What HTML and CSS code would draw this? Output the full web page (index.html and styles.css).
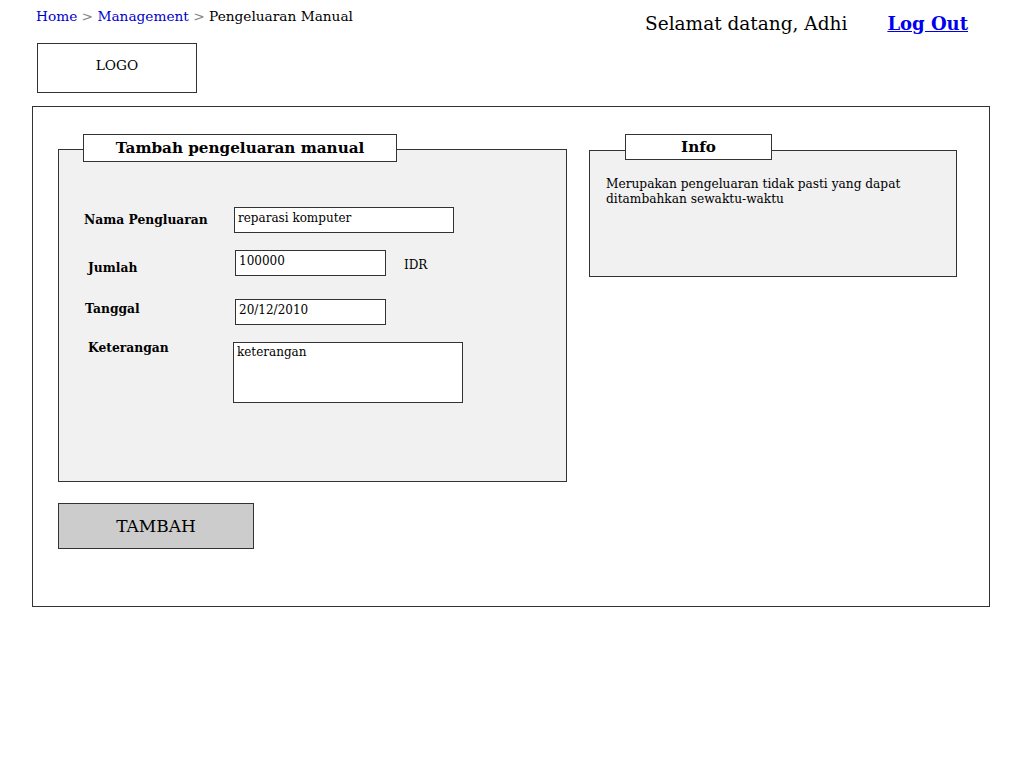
FILE: index.html
```html
<!DOCTYPE html>
<html lang="id">
<head>
<meta charset="utf-8">
<title>Pengeluaran Manual</title>
<link rel="stylesheet" href="styles.css">
</head>
<body>
<header class="top">
  <div class="top-left">
    <nav class="crumbs">
      <a href="#">Home</a><span class="sep"> &gt; </span><a href="#">Management</a><span class="sep"> &gt; </span><span class="here">Pengeluaran Manual</span>
    </nav>
    <div class="logo">LOGO</div>
  </div>
  <div class="welcome">
    <span class="hello">Selamat datang, Adhi</span>
    <a href="#" class="logout">Log Out</a>
  </div>
</header>

<main class="frame">
  <div class="panels">
    <section class="panel panel-form">
      <div class="tab tab-form">Tambah pengeluaran manual</div>
      <div class="box box-form">
        <div class="row row-1">
          <label class="lbl lbl-1">Nama Pengluaran</label>
          <input class="field field-wide" type="text" value="reparasi komputer">
        </div>
        <div class="row row-2">
          <label class="lbl lbl-2">Jumlah</label>
          <input class="field field-mid" type="text" value="100000">
          <span class="unit">IDR</span>
        </div>
        <div class="row row-3">
          <label class="lbl lbl-3">Tanggal</label>
          <input class="field field-mid" type="text" value="20/12/2010">
        </div>
        <div class="row row-4">
          <label class="lbl lbl-4">Keterangan</label>
          <textarea class="area">keterangan</textarea>
        </div>
      </div>
    </section>

    <section class="panel panel-info">
      <div class="tab tab-info">Info</div>
      <div class="box box-info">
        <p class="info-text">Merupakan pengeluaran tidak pasti yang dapat<br>ditambahkan sewaktu-waktu</p>
      </div>
    </section>
  </div>

  <button class="btn" type="button">TAMBAH</button>
</main>
</body>
</html>
```

FILE: styles.css
```css
* { box-sizing: border-box; }

body {
  margin: 0;
  font-family: "DejaVu Serif", serif;
  color: #000;
  background: #fff;
}

.top {
  display: flex;
  justify-content: space-between;
  align-items: flex-start;
  padding: 8px 56px 0 36px;
}

.crumbs {
  font-size: 13.7px;
  line-height: 16px;
  white-space: nowrap;
}
.crumbs a { color: #0000cc; text-decoration: none; }
.crumbs .sep { color: #888; }
.crumbs .here { color: #000; }

.logo {
  margin: 19px 0 0 1px;
  width: 160px;
  height: 50px;
  border: 1px solid #333;
  text-align: center;
  font-size: 13.7px;
  padding-top: 13px;
}

.welcome {
  display: flex;
  gap: 40px;
  margin-top: 5px;
  font-size: 18px;
  line-height: 22px;
}
.hello { font-size: 18.5px; }
.logout {
  color: #0000ee;
  font-weight: bold;
  text-decoration: underline;
}

.frame {
  margin: 13px 0 0 32px;
  width: 958px;
  height: 501px;
  border: 1px solid #333;
  padding: 27px 0 0 25px;
}

.panels {
  display: flex;
  gap: 22px;
  align-items: flex-start;
}

.panel {
  display: flex;
  flex-direction: column;
}

.tab {
  position: relative;
  z-index: 1;
  background: #fff;
  border: 1px solid #333;
  text-align: center;
  font-weight: bold;
  font-size: 15.2px;
}
.tab-form {
  margin: 0 0 -13px 25px;
  width: 314px;
  height: 28px;
  line-height: 26px;
}
.tab-info {
  margin: 0 0 -10px 36px;
  width: 147px;
  height: 26px;
  line-height: 24px;
}

.box {
  background: #f1f1f1;
  border: 1px solid #333;
}
.box-form {
  width: 509px;
  height: 333px;
  padding: 57px 0 0 25px;
  display: flex;
  flex-direction: column;
}
.box-info {
  width: 368px;
  height: 127px;
  padding: 26px 0 0 16px;
}

.info-text {
  margin: 0;
  font-size: 12.2px;
  line-height: 15px;
}

.row {
  display: flex;
  align-items: flex-start;
}
.row-2 { margin-top: 17px; }
.row-3 { margin-top: 23px; }
.row-4 { margin-top: 17px; }

.lbl {
  width: 150px;
  flex: none;
  font-weight: bold;
  font-size: 12.3px;
  line-height: 15px;
}
.lbl-1 { padding-top: 5px; }
.lbl-2 { padding: 10px 0 0 4px; width: 151px; }
.lbl-3 { padding: 2px 0 0 1px; width: 151px; }
.lbl-4 { margin-top: -2px; padding-left: 4px; width: 149px; }

.field {
  height: 26px;
  border: 1px solid #333;
  background: #fff;
  font-family: "DejaVu Serif", serif;
  font-size: 12px;
  color: #000;
  padding: 0 3px 5px 3px;
  margin: 0;
  outline: none;
}
.field-wide { width: 220px; }
.field-mid { width: 151px; }

.unit {
  margin: 8px 0 0 18px;
  font-size: 12px;
}

.area {
  width: 230px;
  height: 61px;
  border: 1px solid #333;
  background: #fff;
  font-family: "DejaVu Serif", serif;
  font-size: 12px;
  color: #000;
  padding: 2px 3px;
  margin: 0;
  resize: none;
  outline: none;
  overflow: hidden;
}

.btn {
  display: block;
  margin-top: 21px;
  width: 196px;
  height: 46px;
  background: #ccc;
  border: 1px solid #333;
  font-family: "DejaVu Serif", serif;
  font-size: 17px;
  color: #000;
  padding: 0;
}
```
